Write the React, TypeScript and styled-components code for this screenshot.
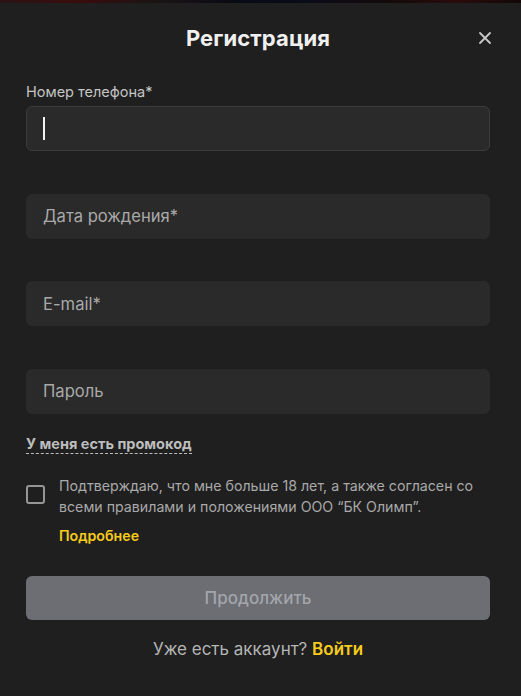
import React from 'react'
import styled, { createGlobalStyle } from 'styled-components'

const GlobalStyle = createGlobalStyle`
  html, body {
    margin: 0;
    padding: 0;
    background: #1f1f1f;
    font-family: Inter, "Noto Sans", "Liberation Sans", sans-serif;
  }
  * { box-sizing: border-box; }
`

const Backdrop = styled.div`
  height: 3px;
  background: linear-gradient(90deg, #2a1414 0%, #3a0c0c 15%, #1a1414 30%, #0a0a14 45%, #0c0c18 60%, #140a0a 75%, #2a0c0c 88%, #120808 100%);
`

const Modal = styled.div`
  background: #1f1f1f;
  border-top-right-radius: 8px;
  min-height: 693px;
  padding: 23px 31px 0 26px;
`

const Header = styled.div`
  position: relative;
  display: flex;
  justify-content: center;
  align-items: center;
  height: 24px;
`

const Title = styled.h1`
  margin: 0;
  font-size: 22px;
  font-weight: 700;
  color: #f0f0f0;
  letter-spacing: 0.1px;
`

const CloseButton = styled.button`
  position: absolute;
  right: -4px;
  top: 3px;
  width: 18px;
  height: 18px;
  padding: 0;
  border: none;
  background: none;
  color: #c8c8c8;
  cursor: pointer;
  display: flex;
  align-items: center;
  justify-content: center;
`

const Form = styled.form`
  display: flex;
  flex-direction: column;
  margin-top: 32px;
`

const Label = styled.label`
  font-size: 14.5px;
  line-height: 20px;
  color: #c4c4c4;
  margin-bottom: 4px;
`

const InputBox = styled.div<{ $focused?: boolean }>`
  height: 45px;
  border-radius: 6px;
  background: #2a2a2a;
  border: 1px solid ${(p) => (p.$focused ? '#3c3c3c' : '#2a2a2a')};
  display: flex;
  align-items: center;
  padding: 0 16px;
  margin-bottom: 42.5px;
`

const Caret = styled.span`
  display: block;
  width: 2px;
  height: 23px;
  background: #f2f2f2;
`

const Placeholder = styled.span`
  font-size: 16.6px;
  color: #a9a9a9;
`

const PromoLink = styled.span`
  align-self: flex-start;
  margin-top: -22.5px;
  font-size: 14.5px;
  font-weight: 700;
  line-height: 19px;
  color: #bdbdbd;
  border-bottom: 1px dashed #bdbdbd;
  cursor: pointer;
`

const AgreeRow = styled.div`
  display: flex;
  align-items: flex-start;
  gap: 14px;
  margin-top: 21px;
`

const Checkbox = styled.span`
  flex: none;
  width: 19px;
  height: 19px;
  margin-top: 10px;
  border: 2px solid #959595;
  border-radius: 3px;
`

const AgreeText = styled.div`
  font-size: 14.2px;
  line-height: 21px;
  color: #a9a9a9;
`

const MoreLink = styled.a`
  display: block;
  margin-top: 8px;
  font-size: 14.2px;
  font-weight: 600;
  color: #f7cb1c;
  text-decoration: none;
`

const SubmitButton = styled.button`
  height: 44px;
  margin-top: 30px;
  border: none;
  border-radius: 6px;
  background: #6c6e74;
  color: #a3a5aa;
  font-family: inherit;
  font-size: 17px;
  font-weight: 500;
`

const Footer = styled.div`
  margin-top: 19px;
  text-align: center;
  font-size: 17px;
  color: #b5b5b5;
`

const LoginLink = styled.a`
  color: #f7cb1c;
  font-weight: 600;
  text-decoration: none;
`

function App(): JSX.Element {
  return (
    <>
      <GlobalStyle />
      <Backdrop />
      <Modal>
        <Header>
          <Title>Регистрация</Title>
          <CloseButton aria-label="close">
            <svg width="14" height="14" viewBox="0 0 14 14">
              <path d="M2 2L12 12M12 2L2 12" stroke="currentColor" strokeWidth="1.8" strokeLinecap="round" />
            </svg>
          </CloseButton>
        </Header>
        <Form onSubmit={(e) => e.preventDefault()}>
          <Label>Номер телефона*</Label>
          <InputBox $focused>
            <Caret />
          </InputBox>
          <InputBox>
            <Placeholder>Дата рождения*</Placeholder>
          </InputBox>
          <InputBox>
            <Placeholder>E-mail*</Placeholder>
          </InputBox>
          <InputBox>
            <Placeholder>Пароль</Placeholder>
          </InputBox>
          <PromoLink>У меня есть промокод</PromoLink>
          <AgreeRow>
            <Checkbox />
            <AgreeText>
              Подтверждаю, что мне больше 18 лет, а также согласен со всеми правилами и положениями ООО “БК Олимп”.
              <MoreLink href="#">Подробнее</MoreLink>
            </AgreeText>
          </AgreeRow>
          <SubmitButton type="submit">Продолжить</SubmitButton>
          <Footer>
            Уже есть аккаунт? <LoginLink href="#">Войти</LoginLink>
          </Footer>
        </Form>
      </Modal>
    </>
  )
}

export default App
